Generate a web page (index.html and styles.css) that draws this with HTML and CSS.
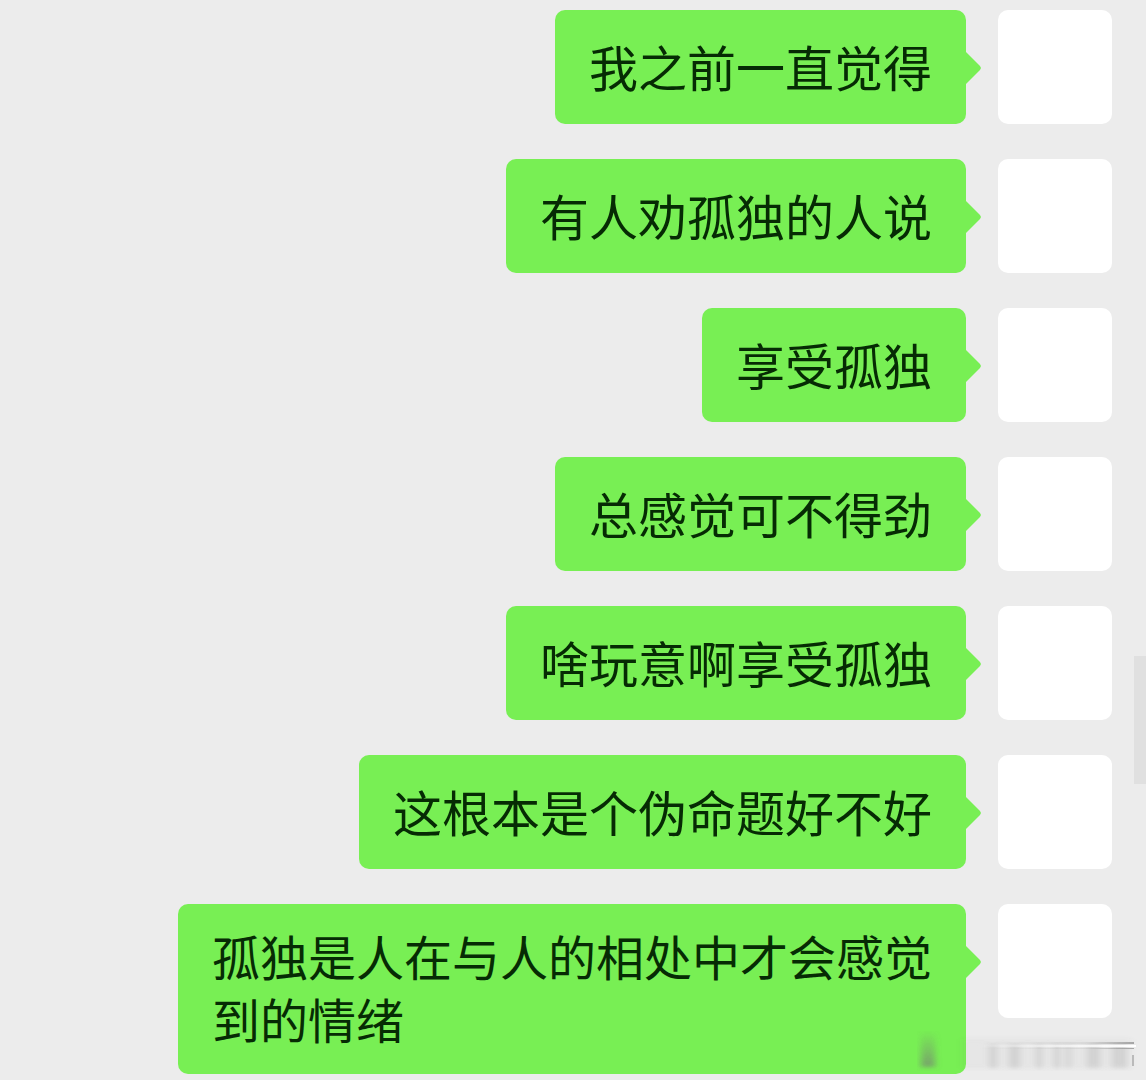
FILE: index.html
```html
<!DOCTYPE html>
<html lang="zh-CN">
<head>
<meta charset="utf-8">
<meta name="viewport" content="width=device-width, initial-scale=1">
<title>聊天</title>
<link rel="stylesheet" href="styles.css">
</head>
<body>
<main class="chat">
  <div class="message"><p class="bubble">我之前一直觉得</p><div class="avatar"></div></div>
  <div class="message"><p class="bubble">有人劝孤独的人说</p><div class="avatar"></div></div>
  <div class="message"><p class="bubble">享受孤独</p><div class="avatar"></div></div>
  <div class="message"><p class="bubble">总感觉可不得劲</p><div class="avatar"></div></div>
  <div class="message"><p class="bubble">啥玩意啊享受孤独</p><div class="avatar"></div></div>
  <div class="message"><p class="bubble">这根本是个伪命题好不好</p><div class="avatar"></div></div>
  <div class="message"><p class="bubble bubble-long">孤独是人在与人的相处中才会感觉到的情绪</p><div class="avatar"></div></div>
</main>
<div class="scroll-thumb"></div>
<svg class="watermark" width="220" height="40" viewBox="0 0 220 40" aria-hidden="true">
  <defs>
    <filter id="soft" x="-20%" y="-20%" width="140%" height="140%"><feGaussianBlur stdDeviation="3 2"/></filter>
    <linearGradient id="fade" x1="0" x2="1"><stop offset="0" stop-color="#777" stop-opacity="0"/><stop offset=".7" stop-color="#777" stop-opacity=".12"/><stop offset="1" stop-color="#777" stop-opacity=".6"/></linearGradient>
    <linearGradient id="rise" x1="0" y1="0" x2="0" y2="1"><stop offset="0" stop-color="#777" stop-opacity="0"/><stop offset="1" stop-color="#777" stop-opacity=".65"/></linearGradient>
    <linearGradient id="shine" x1="0" x2="1"><stop offset="0" stop-color="#fff" stop-opacity="0"/><stop offset="1" stop-color="#fff"/></linearGradient>
  </defs>
  <g filter="url(#soft)" fill="#777">
    <path d="M4 36V0H18V36Z" fill="url(#rise)"/>
    <path d="M45 8H214V37H45Z" opacity=".05"/>
    <path d="M72 14H80V37H72ZM92 14H103V37H92ZM119 14H125V37H119ZM137 14H143V37H137ZM149 14H154V37H149ZM170 14H183V37H170ZM195 14H210V37H195Z" opacity=".17"/>
  </g>
  <path d="M60 11H217V13H60ZM60 17H217V18H60Z" fill="url(#fade)"/>
  <path d="M60 14H219V16H60Z" fill="url(#shine)"/>
  <path d="M215 24H217V35H215Z" fill="#999" opacity=".6"/>
</svg>
</body>
</html>
```
FILE: styles.css
```css
* {
  box-sizing: border-box;
}

body {
  margin: 0;
  min-height: 100vh;
  background: #ececec;
  color: #062b04;
  font-family: "Noto Sans CJK SC", sans-serif;
}

.chat {
  display: flex;
  flex-direction: column;
  gap: 35px;
  padding: 10px 34px 6px;
}

.message {
  display: flex;
  justify-content: flex-end;
  align-items: flex-start;
  gap: 32px;
}

.bubble {
  position: relative;
  max-width: 788px;
  margin: 0;
  padding: 24px 34px 26px;
  border-radius: 10px;
  background: #78ef54;
  font-size: 49px;
  line-height: 64px;
}

.bubble::after {
  content: "";
  position: absolute;
  top: 42px;
  left: 100%;
  width: 15px;
  height: 32px;
  background: inherit;
  clip-path: polygon(0 0, 14px 14px, 15px 16px, 14px 18px, 0 32px);
}

.bubble-long {
  padding: 20px 34px 24px;
  font-size: 48px;
  line-height: 63px;
}

.avatar {
  flex: none;
  width: 114px;
  height: 114px;
  border-radius: 10px;
  background: #fff;
}

.scroll-thumb {
  position: fixed;
  top: 656px;
  right: 0;
  width: 12px;
  height: 128px;
  background: #e0e0e0;
}

.watermark {
  position: fixed;
  right: 9px;
  bottom: 9px;
}
```
